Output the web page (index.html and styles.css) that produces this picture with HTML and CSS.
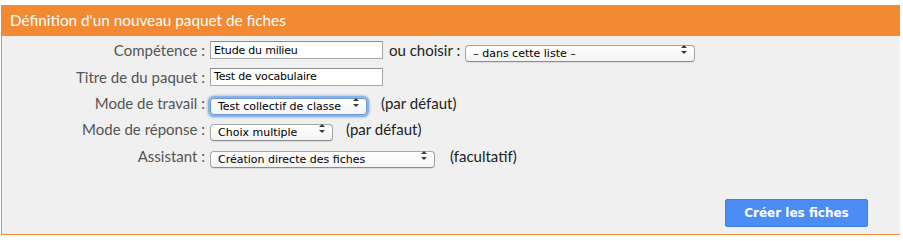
FILE: index.html
```html
<!DOCTYPE html>
<html lang="fr">
<head>
    <meta charset="UTF-8">
    <title>Nouveau paquet de fiches</title>
    <link rel="stylesheet" href="styles.css">
</head>
<body>
    <div class="panel">
        <div class="panel-head">Définition d'un nouveau paquet de fiches</div>
        <form class="panel-body">
            <!-- Compétence -->
            <div class="row">
                <label class="lbl">Compétence :</label>
                <input class="txt" type="text" value="Etude du milieu">
                <span class="note note-or">ou choisir :</span>
                <span class="sel sel-list"><select><option>– dans cette liste –</option></select></span>
            </div>

            <!-- Titre -->
            <div class="row">
                <label class="lbl">Titre de du paquet :</label>
                <input class="txt" type="text" value="Test de vocabulaire">
            </div>

            <!-- Mode de travail -->
            <div class="row">
                <label class="lbl">Mode de travail :</label>
                <span class="sel sel-work focus"><select><option>Test collectif de classe</option></select></span>
                <span class="note note-work">(par défaut)</span>
            </div>

            <!-- Mode de réponse -->
            <div class="row">
                <label class="lbl">Mode de réponse :</label>
                <span class="sel sel-answer"><select><option>Choix multiple</option></select></span>
                <span class="note note-answer">(par défaut)</span>
            </div>

            <!-- Assistant -->
            <div class="row">
                <label class="lbl">Assistant :</label>
                <span class="sel sel-help"><select><option>Création directe des fiches</option></select></span>
                <span class="note note-help">(facultatif)</span>
            </div>

            <div class="actions">
                <button type="button" class="btn">Créer les fiches</button>
            </div>
        </form>
    </div>
</body>
</html>
```

FILE: styles.css
```css
body {
    margin: 0;
    padding: 0;
    background-color: #fff;
    font-family: Lato, "DejaVu Sans", sans-serif;
}

.panel {
    width: 899px;
    margin: 5px 0 0 1px;
}

.panel-head {
    height: 31px;
    line-height: 31px;
    padding-left: 9px;
    background-color: #f38a33;
    color: #fff;
    font-size: 15.3px;
}

.panel-body {
    margin: 0;
    padding: 1px 0 7px;
    background-color: #f0f0f0;
    border-left: 1px solid #ef8a3a;
    border-bottom: 1px solid #ef8a3a;
}

.row {
    display: flex;
    align-items: center;
    height: 26.4px;
}

.lbl {
    width: 208px;
    flex-shrink: 0;
    padding-right: 5px;
    box-sizing: border-box;
    text-align: right;
    color: #555;
    font-size: 15px;
}

.txt {
    width: 173px;
    height: 18px;
    box-sizing: border-box;
    margin: 0;
    padding: 0 3px;
    border: 1px solid #a8a8a8;
    border-top-color: #8e8e8e;
    background: #fff;
    color: #000;
    font-family: "DejaVu Sans", sans-serif;
    font-size: 11px;
    letter-spacing: -0.2px;
}

.note {
    color: #222;
    font-size: 15px;
}

.note-or { margin-left: 6px; margin-right: 5px; }
.note-work { margin-left: 14px; }
.note-answer { margin-left: 13px; }
.note-help { margin-left: 15px; }

.sel {
    position: relative;
    display: inline-block;
    height: 17px;
    margin-top: -1px;
}

.sel select {
    -webkit-appearance: none;
    appearance: none;
    width: 100%;
    height: 17px;
    margin: 0;
    padding: 0 0 0 7px;
    border: 1px solid #a6a6a6;
    border-bottom-color: #8c8c8c;
    border-radius: 4px;
    background: linear-gradient(#fff, #f4f4f4);
    color: #000;
    font-family: "DejaVu Sans", sans-serif;
    font-size: 11px;
    line-height: 15px;
    box-shadow: 0 1px 1px rgba(0, 0, 0, 0.08);
}

/* double fleche du menu */
.sel::before,
.sel::after {
    content: "";
    position: absolute;
    right: 8px;
    width: 0;
    height: 0;
    border-left: 3px solid transparent;
    border-right: 3px solid transparent;
    pointer-events: none;
}

.sel::before {
    top: 4px;
    border-bottom: 3px solid #3a3a3a;
}

.sel::after {
    top: 10px;
    border-top: 3px solid #3a3a3a;
}

.sel.focus select {
    box-shadow: 0 0 0 2px #86b3ea, 0 0 2px 3px rgba(90, 150, 230, 0.4);
    border-color: #6f98cc;
}

.sel-list { width: 230px; }
.sel-work { width: 157px; }
.sel-answer { width: 123px; }
.sel-help { width: 225px; }

.actions {
    display: flex;
    justify-content: flex-end;
    padding: 30px 32px 0 0;
}

.btn {
    width: 143px;
    height: 28px;
    border: 1px solid #3f7fe6;
    border-radius: 2px;
    background-color: #4b8cf5;
    color: #fff;
    font-family: "DejaVu Sans", sans-serif;
    font-weight: bold;
    font-size: 12px;
    cursor: pointer;
}
```
